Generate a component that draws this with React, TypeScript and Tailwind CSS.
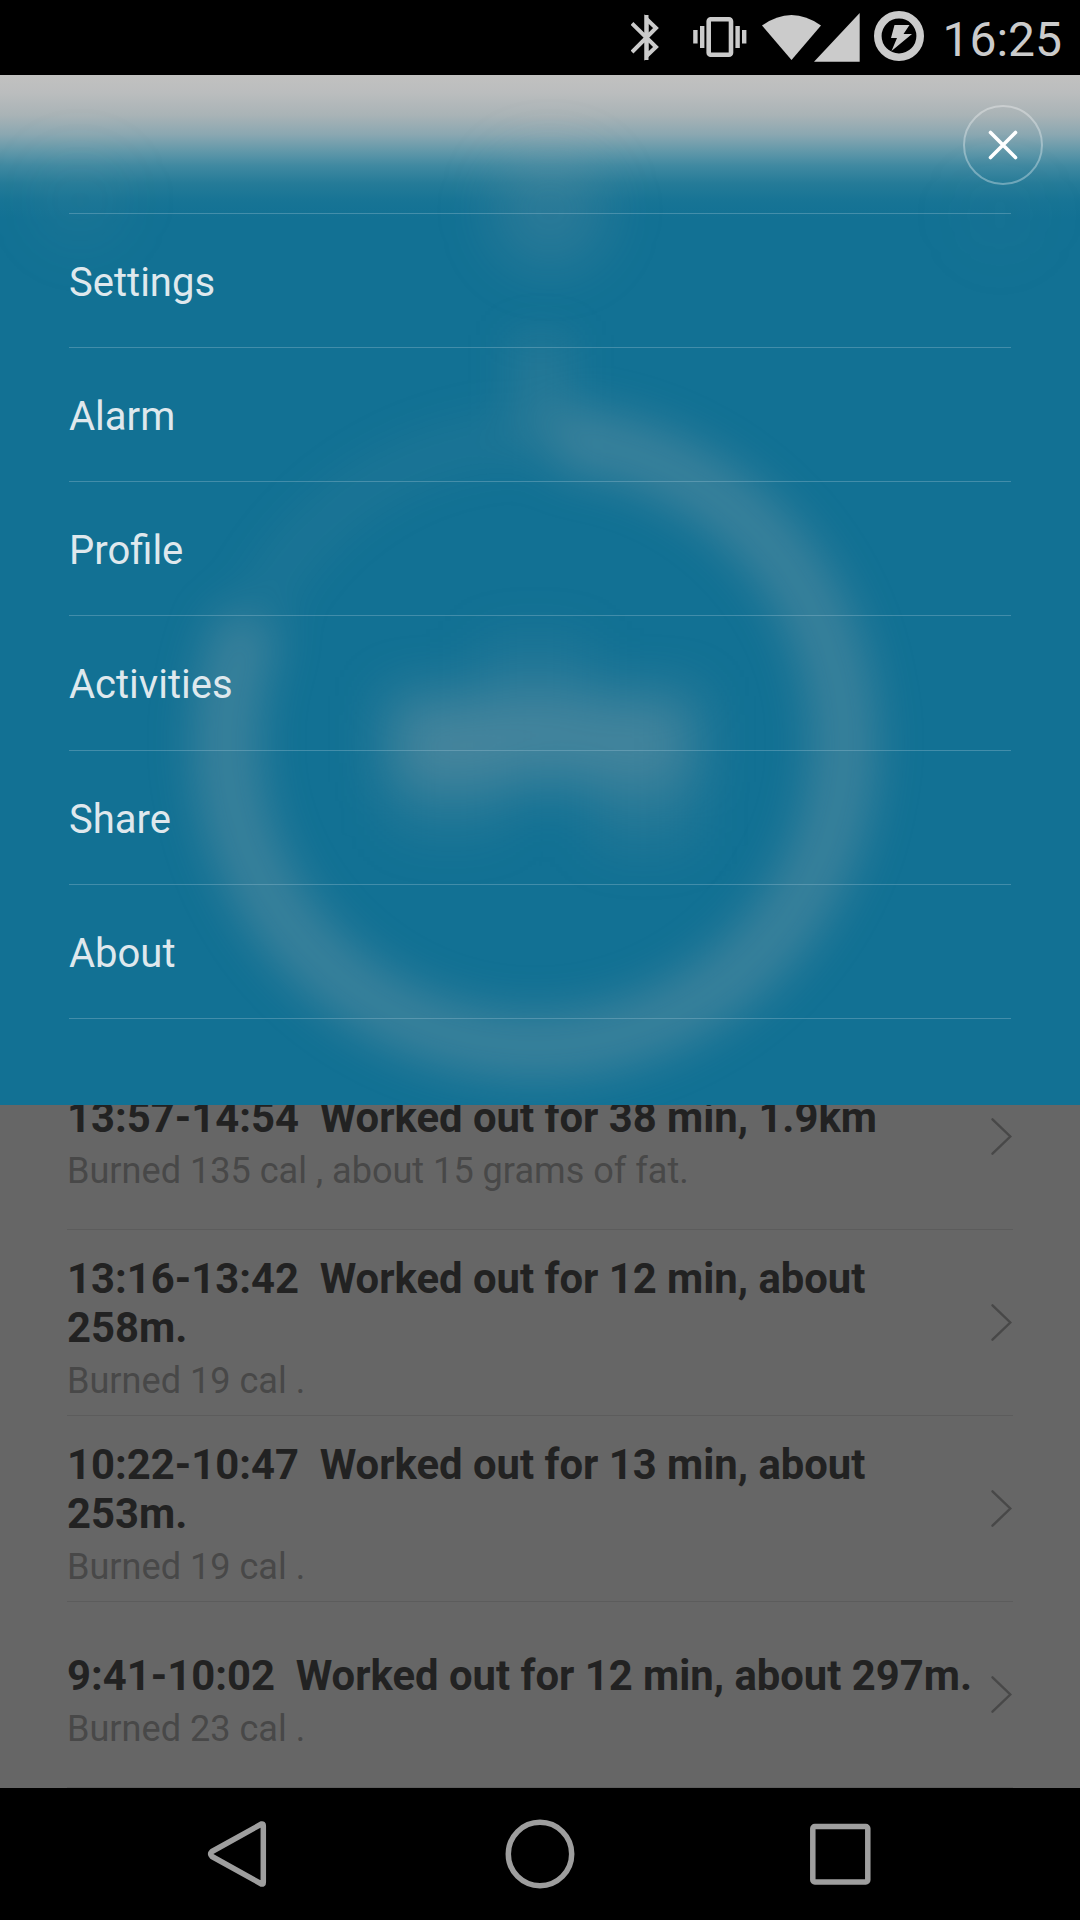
import React from "react";

const MENU = [
  { label: "Settings", box: "h-[134px]" },
  { label: "Alarm", box: "h-[134px]" },
  { label: "Profile", box: "h-[134px]" },
  { label: "Activities", box: "h-[135px]" },
  { label: "Share", box: "h-[134px]" },
  { label: "About", box: "h-[134px]" },
];

const ACTIVITIES = [
  { time: "13:57-14:54", text: "Worked out for 38 min, 1.9km", note: "Burned 135 cal , about 15 grams of fat." },
  { time: "13:16-13:42", text: "Worked out for 12 min, about 258m.", note: "Burned 19 cal ." },
  { time: "10:22-10:47", text: "Worked out for 13 min, about 253m.", note: "Burned 19 cal ." },
  { time: "9:41-10:02", text: "Worked out for 12 min, about 297m.", note: "Burned 23 cal ." },
];

function StatusBar() {
  return (
    <header className="flex h-[75px] shrink-0 items-center justify-end bg-black pr-[18px] text-[#cbcbcb]">
      <svg className="mr-[32px] h-[75px] w-[30px]" viewBox="631.5 0 30 75" fill="none" stroke="currentColor" strokeWidth="4">
        <path d="M632.5 23.5 L656.5 47 L647 56 V19 L656.5 28 L632.5 52" />
        <path d="M647 15 V60" />
      </svg>
      <svg className="mr-[15px] h-[75px] w-[54px]" viewBox="693 0 54 75" fill="currentColor">
        <rect x="708.7" y="19.2" width="22.3" height="35.6" rx="2" fill="none" stroke="currentColor" strokeWidth="4.6" />
        <rect x="700" y="26" width="4.4" height="22" />
        <rect x="693.2" y="30" width="4.4" height="13.5" />
        <rect x="735.4" y="26" width="4.4" height="22" />
        <rect x="742" y="30" width="4.4" height="13.5" />
      </svg>
      <svg className="mr-[13px] h-[75px] w-[98px]" viewBox="762 0 98 75" fill="currentColor">
        <path d="M762 25.5 Q791.5 4.5 821 25.5 L791.5 60 Z" />
        <path d="M814 61.7 L859.7 13 V61.7 Z" />
      </svg>
      <svg className="mr-[17px] h-[75px] w-[52px]" viewBox="873 0 52 75" fill="currentColor">
        <circle cx="899" cy="36" r="21.2" fill="none" stroke="currentColor" strokeWidth="7.6" />
        <path d="M894.5 25 H909.5 L903.5 34 H912 L891.5 51 L897 38 H891 Z" />
      </svg>
      <span className="mt-[4px] text-[48px] leading-[56px]">16:25</span>
    </header>
  );
}

function ProgressBackdrop() {
  return (
    <svg className="absolute inset-0 h-[1030px] w-[1080px]" viewBox="0 75 1080 1030">
      <defs>
        <linearGradient id="panel" x1="0" y1="75" x2="0" y2="1105" gradientUnits="userSpaceOnUse">
          <stop offset="0" stopColor="#c1c1c0" />
          <stop offset="0.017" stopColor="#bbbdbe" />
          <stop offset="0.039" stopColor="#a9b3b6" />
          <stop offset="0.058" stopColor="#8aa7b1" />
          <stop offset="0.073" stopColor="#6499aa" />
          <stop offset="0.088" stopColor="#4089a1" />
          <stop offset="0.105" stopColor="#257b98" />
          <stop offset="0.122" stopColor="#177495" />
          <stop offset="0.14" stopColor="#127194" />
          <stop offset="1" stopColor="#127194" />
        </linearGradient>
        <filter id="soft" x="0" y="75" width="1080" height="1130" filterUnits="userSpaceOnUse" colorInterpolationFilters="sRGB">
          <feGaussianBlur stdDeviation="22" />
        </filter>
        <filter id="softer" x="-80" y="75" width="1240" height="1130" filterUnits="userSpaceOnUse" colorInterpolationFilters="sRGB">
          <feGaussianBlur stdDeviation="28" />
        </filter>
      </defs>
      <rect y="75" width="1080" height="1030" fill="url(#panel)" />
      <g filter="url(#soft)" fill="none" stroke="#a3a9ac">
        <path d="M558 439 A309 304 0 1 1 252 621" strokeWidth="66" strokeOpacity="0.27" />
        <path d="M252 621 A309 304 0 0 1 558 439" strokeWidth="54" strokeOpacity="0.06" />
        <path d="M541 335 V440" strokeWidth="60" strokeOpacity="0.13" />
      </g>
      <g filter="url(#softer)" fill="#a3a9ac">
        <rect x="390" y="696" width="304" height="86" fillOpacity="0.34" />
        <rect x="396" y="755" width="110" height="75" fillOpacity="0.12" />
        <rect x="595" y="770" width="97" height="75" fillOpacity="0.13" />
        <rect x="480" y="640" width="110" height="70" fillOpacity="0.1" />
        <circle cx="550" cy="210" r="58" fillOpacity="0.17" />
        <circle cx="80" cy="200" r="50" fillOpacity="0.05" />
        <circle cx="1000" cy="215" r="45" fillOpacity="0.03" />
      </g>
    </svg>
  );
}

function MenuPanel() {
  return (
    <section className="relative h-[1030px] shrink-0 overflow-hidden">
      <ProgressBackdrop />
      <div className="relative flex h-full flex-col">
        <div className="flex h-[138px] shrink-0 justify-end pt-[30px] pr-[37px]">
          <button className="size-[80px]" aria-label="Close">
            <svg className="size-[80px]" viewBox="0 0 80 80" fill="none" stroke="white">
              <circle cx="40" cy="40" r="39" strokeWidth="2" strokeOpacity="0.33" />
              <path d="M27.5 27.5 L52.5 52.5 M52.5 27.5 L27.5 52.5" strokeWidth="3.6" strokeLinecap="round" />
            </svg>
          </button>
        </div>
        <nav className="mr-[69px] ml-[69px] border-t border-[#9fc4d3]/35">
          {MENU.map((m) => (
            <a key={m.label} className={`flex items-center border-b border-[#9fc4d3]/35 pt-[4px] text-[40px] leading-[48px] text-[#dfe8ed] ${m.box}`}>
              {m.label}
            </a>
          ))}
        </nav>
      </div>
    </section>
  );
}

function ActivityList() {
  return (
    <section className="flex h-[683px] shrink-0 flex-col justify-end overflow-hidden bg-[#666666] px-[67px]">
      {ACTIVITIES.map((a) => (
        <div key={a.time} className="flex h-[186px] shrink-0 items-center border-b border-[#5c5c5c]">
          <div className="w-[924px] shrink-0 pt-[11px]">
            <div className="text-[41.8px] leading-[49px] font-bold whitespace-pre-wrap text-[#222222]">{`${a.time}  ${a.text}`}</div>
            <div className="mt-[8px] text-[36.1px] leading-[42px] text-[#484848]">{a.note}</div>
          </div>
          <svg className="h-[38px] w-[21px] shrink-0" viewBox="0 0 21 38" fill="none" stroke="#484848" strokeWidth="2.4" strokeLinecap="round">
            <path d="M1.5 1.3 L19.3 18.5 L1.5 35.7" />
          </svg>
        </div>
      ))}
    </section>
  );
}

function NavigationBar() {
  return (
    <footer className="flex h-[132px] shrink-0 items-center justify-between bg-black pr-[209px] pl-[205px] text-[#9e9e9e]">
      <svg className="h-[72px] w-[64px]" viewBox="205 1818 64 72" fill="none" stroke="currentColor" strokeWidth="5.5" strokeLinejoin="round">
        <path d="M212 1851.5 Q209.5 1854 212 1856.5 L261.5 1884 Q263.3 1884.5 263.3 1882.5 V1825.5 Q263.3 1823.5 261.5 1824 Z" />
      </svg>
      <svg className="h-[72px] w-[72px]" viewBox="502 1818 72 72" fill="none" stroke="currentColor" strokeWidth="5.5" overflow="visible">
        <circle cx="540" cy="1854" r="31.7" />
      </svg>
      <svg className="h-[72px] w-[64px]" viewBox="807 1818 64 72" fill="none" stroke="currentColor" strokeWidth="5.5" overflow="visible">
        <rect x="812.8" y="1826.5" width="55" height="55.5" rx="2" />
      </svg>
    </footer>
  );
}

export default function App() {
  return (
    <main className="flex h-[1920px] w-[1080px] flex-col overflow-hidden bg-black font-['Roboto',sans-serif]">
      <StatusBar />
      <MenuPanel />
      <ActivityList />
      <NavigationBar />
    </main>
  );
}
